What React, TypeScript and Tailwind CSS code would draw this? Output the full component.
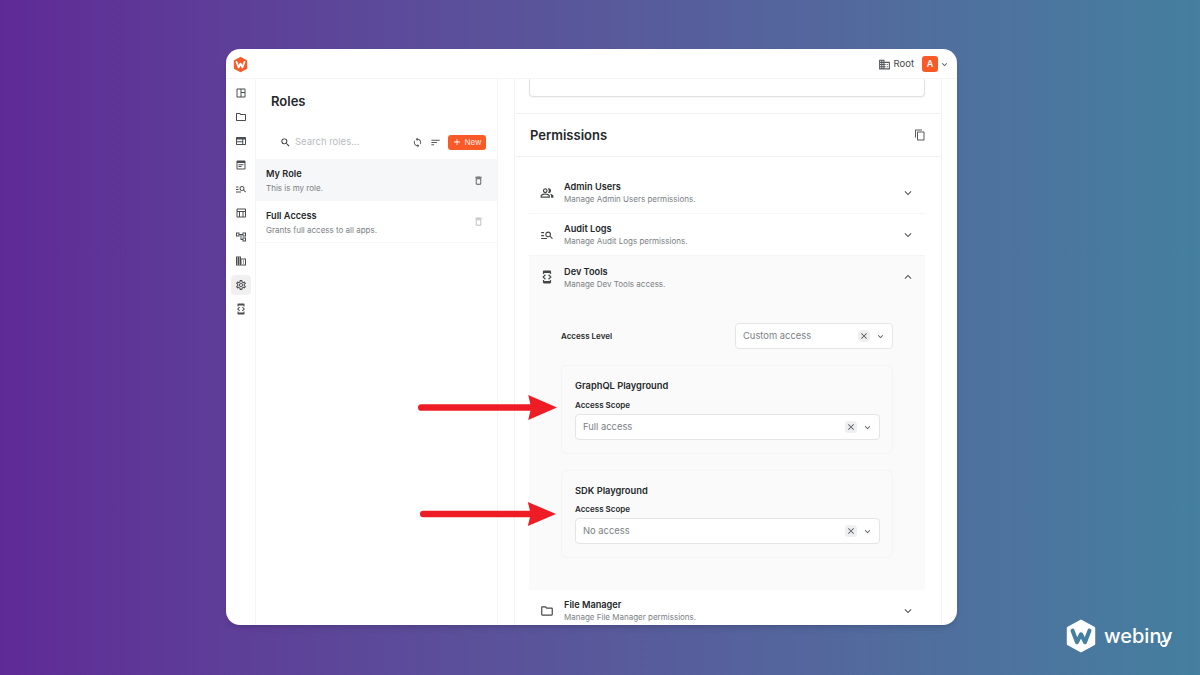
import React from "react";
import {
  MdOutlineSpaceDashboard,
  MdOutlineFolder,
  MdOutlineWeb,
  MdOutlineManageSearch,
  MdOutlineTableChart,
  MdOutlineAccountTree,
  MdOutlineDomain,
  MdOutlineSettings,
  MdOutlineDeveloperMode,
  MdOutlineDelete,
  MdOutlineContentCopy,
  MdOutlinePeopleAlt,
  MdSearch,
  MdSync,
  MdSort,
  MdAdd,
  MdClose,
  MdExpandMore,
  MdExpandLess,
} from "react-icons/md";

// box with a header band and two text lines, no matching icon in the packages
const FormIcon = ({ className }: { className?: string }) => (
  <svg viewBox="0 0 24 24" fill="currentColor" className={className}>
    <path
      fillRule="evenodd"
      d="M5 3h14a2 2 0 0 1 2 2v14a2 2 0 0 1-2 2H5a2 2 0 0 1-2-2V5a2 2 0 0 1 2-2Zm0 5v11h14V8ZM7 10.500h10v2H7Zm0 3.500h6v2H7Z"
    />
  </svg>
);

const sideIcons = [
  MdOutlineSpaceDashboard,
  MdOutlineFolder,
  MdOutlineWeb,
  FormIcon,
  MdOutlineManageSearch,
  MdOutlineTableChart,
  MdOutlineAccountTree,
  MdOutlineDomain,
  MdOutlineSettings,
  MdOutlineDeveloperMode,
];

const HexLogo = ({ className, fill, letter }: { className: string; fill: string; letter: string }) => (
  <svg viewBox="0 0 36 40" className={className}>
    <path
      d="M18 1.500 33 9.500a2 2 0 0 1 1 1.800v17.400a2 2 0 0 1-1 1.800L18 38.500 3 30.500a2 2 0 0 1-1-1.800V11.300a2 2 0 0 1 1-1.800Z"
      fill={fill}
    />
    <path
      d="M8.500 14 13.500 27l4.500-9 4.500 9 5-13"
      fill="none"
      stroke={letter}
      strokeWidth="4.500"
      strokeLinecap="round"
      strokeLinejoin="round"
    />
  </svg>
);

const Select = ({ value, className }: { value: string; className: string }) => (
  <div className={`flex h-[26px] items-center rounded border border-[#e5e5e5] bg-white pl-[7px] pr-[6px] ${className}`}>
    <span className="flex-1 pt-[1px] text-[9.400px] text-[#7b7f85]">{value}</span>
    <span className="mr-[5px] flex h-[12px] w-[12px] items-center justify-center rounded-sm bg-[#eeeff0]">
      <MdClose className="h-[10px] w-[10px] text-[#55585c]" />
    </span>
    <MdExpandMore className="h-[11px] w-[11px] text-[#55585c]" />
  </div>
);

const PermissionRow = ({
  icon: Icon,
  title,
  desc,
  open,
}: {
  icon: React.ComponentType<{ className?: string }>;
  title: string;
  desc: string;
  open?: boolean;
}) => (
  <div className={`flex h-[42px] items-center pl-[11px] pr-[10px] ${open ? "" : "border-b border-[#f5f5f5]"}`}>
    <Icon className="h-[14px] w-[14px] text-[#44474a]" />
    <div className="ml-[10px] flex-1 pt-[1px]">
      <div className="text-[9.200px] font-semibold leading-[13px] text-[#25282b]">{title}</div>
      <div className="text-[8px] leading-[13px] text-[#7b7f85]">{desc}</div>
    </div>
    {open ? (
      <MdExpandLess className="h-[14px] w-[14px] text-[#55585c]" />
    ) : (
      <MdExpandMore className="h-[14px] w-[14px] text-[#55585c]" />
    )}
  </div>
);

const RoleRow = ({ title, desc, className, iconClass }: { title: string; desc: string; className: string; iconClass: string }) => (
  <div className={`flex h-[42px] items-center pl-[10px] pr-[13px] ${className}`}>
    <div className="flex-1 pt-[2px]">
      <div className="text-[9.200px] font-semibold leading-[13px] text-[#25282b]">{title}</div>
      <div className="mt-[2px] text-[8px] leading-[13px] text-[#7b7f85]">{desc}</div>
    </div>
    <MdOutlineDelete className={`h-[11px] w-[11px] ${iconClass}`} />
  </div>
);

const ScopeCard = ({ title, value, className, labelClass }: { title: string; value: string; className: string; labelClass: string }) => (
  <div className={`rounded-md border border-[#f4f4f4] pl-[13px] pr-[12px] pt-[13px] ${className}`}>
    <div className="text-[9.300px] font-semibold leading-[13px] text-[#25282b]">{title}</div>
    <div className={`text-[8px] font-semibold leading-[11px] text-[#25282b] ${labelClass}`}>Access Scope</div>
    <Select value={value} className="mt-[3px]" />
  </div>
);

const Arrow = ({ className }: { className: string }) => (
  <svg viewBox="0 0 140 26" preserveAspectRatio="none" className={className}>
    <path d="M3.500 13H114" stroke="#ee1c25" strokeWidth="7" strokeLinecap="round" />
    <path d="M111 0 140 13 111 26 114 13Z" fill="#ee1c25" />
  </svg>
);

export default function App() {
  return (
    <div className="relative h-[675px] w-[1200px] overflow-hidden bg-gradient-to-r from-[#5f2a96] to-[#447f9f] pl-[226px] pt-[49px] font-['Inter',sans-serif]">
      <div className="flex h-[576px] w-[731px] flex-col overflow-hidden rounded-[14px] bg-white shadow-md">
        {/* Top bar */}
        <div className="flex h-[30px] shrink-0 items-center border-b border-[#f5f5f5] pl-[7px] pr-[7px] pt-[1px]">
          <HexLogo className="h-[17px] w-[15px]" fill="#fa5a28" letter="#ffffff" />
          <div className="ml-auto flex items-center">
            <MdOutlineDomain className="h-[13px] w-[13px] text-[#55585c]" />
            <span className="ml-[3px] text-[9.500px] text-[#44474a]">Root</span>
            <span className="ml-[8px] flex h-[16px] w-[16px] items-center justify-center rounded-[3px] bg-[#fa5a28] text-[9px] font-semibold text-white">
              A
            </span>
            <MdExpandMore className="ml-[1px] h-[11px] w-[11px] text-[#55585c]" />
          </div>
        </div>

        <div className="flex min-h-0 flex-1">
          {/* Sidebar */}
          <div className="flex w-[30px] shrink-0 flex-col items-center gap-[4px] border-r border-[#f5f5f5] pt-[4px]">
            {sideIcons.map((Icon, i) => (
              <div
                key={i}
                className={`flex h-[20px] w-[20px] items-center justify-center rounded ${i === 8 ? "bg-[#f0f0f1]" : ""}`}
              >
                <Icon className="h-[12px] w-[12px] text-[#4a4d50]" />
              </div>
            ))}
          </div>

          {/* Roles list */}
          <div className="w-[242px] shrink-0 border-r border-[#f5f5f5]">
            <div className="pl-[15px] pt-[14px] text-[13px] font-semibold leading-[16px] text-[#25282b]">Roles</div>
            <div className="mt-[19px] flex h-[28px] items-center pl-[24px] pr-[11px]">
              <MdSearch className="h-[11px] w-[11px] text-[#25282b]" />
              <span className="ml-[4px] flex-1 pt-[1px] text-[9.500px] text-[#b9bcc0]">Search roles...</span>
              <MdSync className="h-[11px] w-[11px] text-[#55585c]" />
              <MdSort className="ml-[7px] h-[11px] w-[11px] text-[#55585c]" />
              <span className="ml-[7px] flex h-[15px] w-[38px] items-center justify-center rounded-[3px] bg-[#fa5a28] text-[8px] font-normal text-[#ffe9e0]">
                <MdAdd className="mr-[2px] h-[10px] w-[10px] text-white" />
                New
              </span>
            </div>
            <RoleRow
              title="My Role"
              desc="This is my role."
              className="mt-[3px] bg-[#f6f7f8]"
              iconClass="text-[#55585c]"
            />
            <RoleRow
              title="Full Access"
              desc="Grants full access to all apps."
              className="border-b border-[#f5f5f5]"
              iconClass="text-[#b9bcc0]"
            />
          </div>

          {/* Form */}
          <div className="min-w-0 flex-1 pl-[16px] pr-[15px]">
            <div className="h-full overflow-hidden border-x border-[#f2f2f2]">
              <div className="border-b border-[#f2f2f2] pb-[16px] pl-[14px] pr-[16px]">
                <div className="h-[18px] rounded-b border border-t-0 border-[#e2e2e2] shadow-xs" />
              </div>
              <div className="flex h-[43px] items-center justify-between border-b border-[#f2f2f2] px-[15px] pt-[1px]">
                <span className="text-[13px] font-semibold text-[#25282b]">Permissions</span>
                <MdOutlineContentCopy className="-mt-[2px] h-[12px] w-[12px] text-[#55585c]" />
              </div>
              <div className="pl-[14px] pr-[16px] pt-[15px]">
                <PermissionRow icon={MdOutlinePeopleAlt} title="Admin Users" desc="Manage Admin Users permissions." />
                <PermissionRow icon={MdOutlineManageSearch} title="Audit Logs" desc="Manage Audit Logs permissions." />
                <div className="h-[334px] bg-[#fafafa]">
                  <PermissionRow icon={MdOutlineDeveloperMode} title="Dev Tools" desc="Manage Dev Tools access." open />
                  <div className="px-[32px] pt-[25px]">
                    <div className="flex items-center justify-between">
                      <span className="text-[8px] font-semibold text-[#25282b]">Access Level</span>
                      <Select value="Custom access" className="w-[158px]" />
                    </div>
                    <div className="mt-[16px] flex flex-col gap-[16px]">
                      <ScopeCard title="GraphQL Playground" value="Full access" className="h-[89px]" labelClass="mt-[8px]" />
                      <ScopeCard title="SDK Playground" value="No access" className="h-[88px]" labelClass="mt-[7px]" />
                    </div>
                  </div>
                </div>
                <PermissionRow icon={MdOutlineFolder} title="File Manager" desc="Manage File Manager permissions." />
              </div>
            </div>
          </div>
        </div>
      </div>

      {/* Annotation arrows */}
      <Arrow className="absolute left-[418px] top-[395px] h-[25px] w-[139px]" />
      <Arrow className="absolute left-[420px] top-[502px] h-[24px] w-[136px]" />

      {/* Webiny mark */}
      <div className="absolute left-[1065px] top-[618px] flex items-center">
        <HexLogo className="h-[36px] w-[32px]" fill="#ffffff" letter="#447f9f" />
        <span className="ml-[7px] text-[20px] font-medium leading-none text-white">webiny</span>
        <svg viewBox="0 0 14 14" className="absolute left-[93px] top-[15px] h-[14px] w-[14px]">
          <path
            d="M12 1v3c0 3-3 4-5 4S3 9 3 10.500 4.500 13 6 13s2.500-1 2.500-3"
            fill="none"
            stroke="#ffffff"
            strokeWidth="1.600"
            strokeLinecap="round"
          />
        </svg>
      </div>
    </div>
  );
}
